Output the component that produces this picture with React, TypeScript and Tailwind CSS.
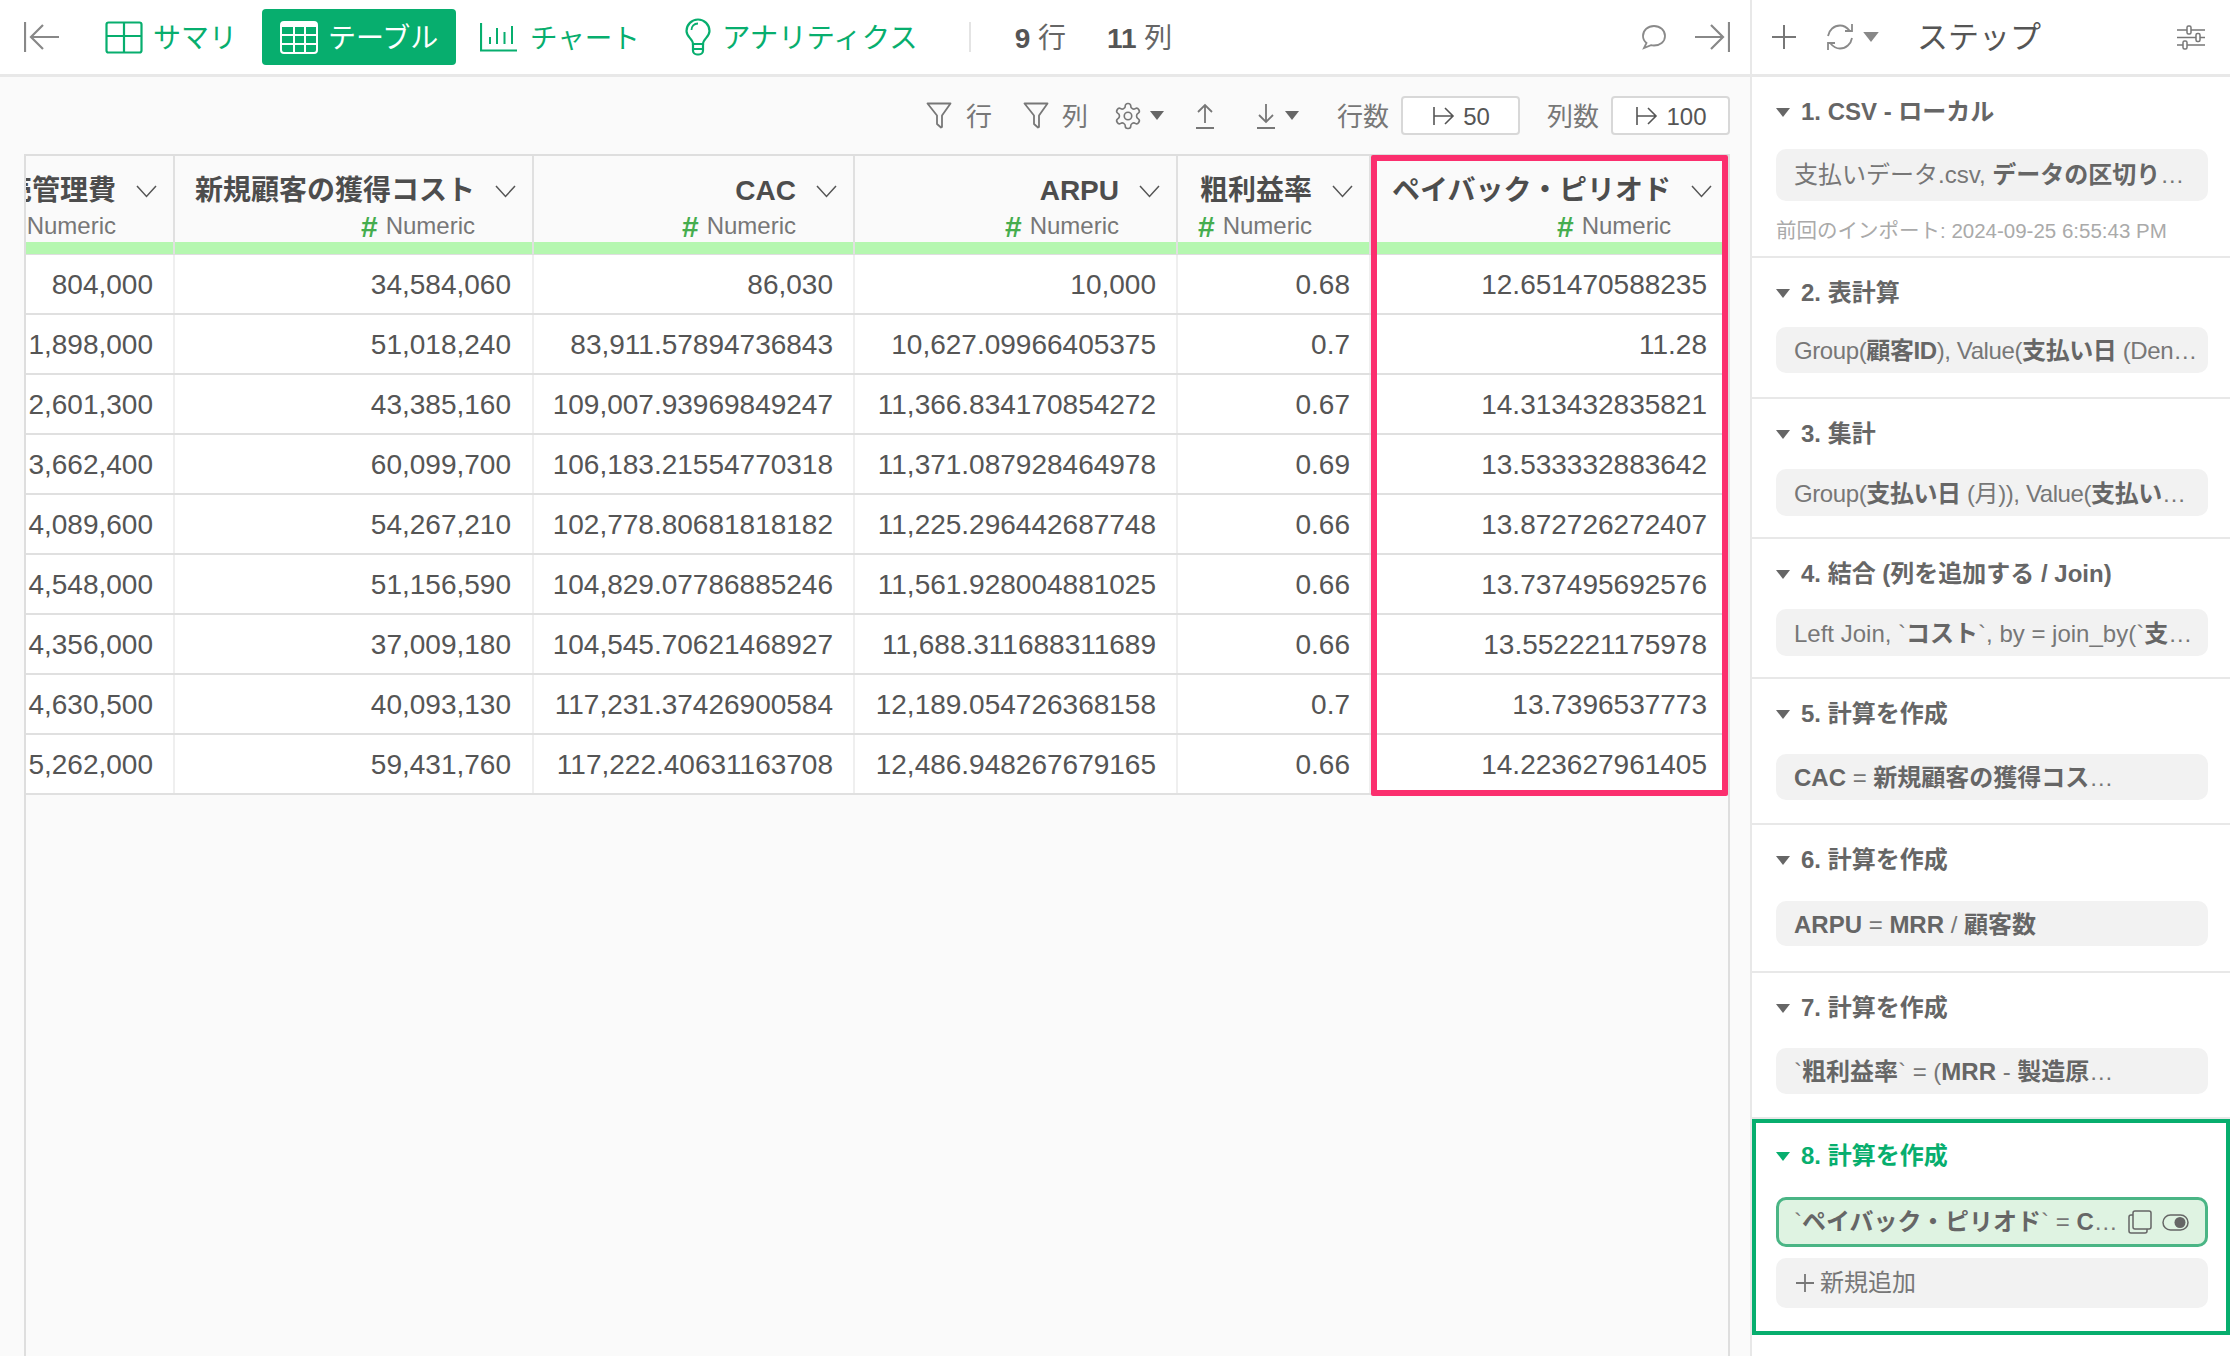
import type { ReactNode } from "react"

const GREEN = "#07ae6e"

function BackArrow() {
  return (
    <svg width="36" height="32" viewBox="0 0 36 32" fill="none" stroke="#888" strokeWidth="2.2">
      <path d="M1 1v30" />
      <path d="M35 16H8M19 4L7 16l12 12" />
    </svg>
  )
}

function ForwardArrow() {
  return (
    <svg width="36" height="32" viewBox="0 0 36 32" fill="none" stroke="#888" strokeWidth="2.2">
      <path d="M35 1v30" />
      <path d="M1 16h27M17 4l12 12-12 12" />
    </svg>
  )
}

function SummaryIcon() {
  return (
    <svg width="38" height="33" viewBox="0 0 38 33" fill="none" stroke={GREEN} strokeWidth="2.2">
      <rect x="1.500" y="1.500" width="35" height="30" rx="2" />
      <path d="M19 1.500v30M1.500 15h35" />
    </svg>
  )
}

function TableIcon() {
  return (
    <svg width="38" height="33" viewBox="0 0 38 33" fill="none" stroke="#fff" strokeWidth="2">
      <rect x="1" y="1" width="36" height="31" rx="3" />
      <path d="M1 3.500h36" strokeWidth="5" />
      <path d="M14 1v31M25 1v31M1 14h36M1 23h36" />
    </svg>
  )
}

function ChartIcon() {
  return (
    <svg width="37" height="29" viewBox="0 0 37 29" fill="none" stroke={GREEN} strokeWidth="2">
      <path d="M1 0v27.500h36" strokeWidth="2.200" />
      <path d="M10 21v-7M17 21V5M24.500 21V9M32 21V3" />
    </svg>
  )
}

function BulbIcon() {
  return (
    <svg width="26" height="38" viewBox="0 0 26 38" fill="none" stroke={GREEN} strokeWidth="2.200">
      <path d="M8 26c0-5-6.500-7-6.500-13a11.500 11.500 0 0 1 23 0c0 6-6.500 8-6.500 13z" />
      <path d="M13 5.500c-4 0-6.500 3-6.500 6.500" strokeWidth="1.800" />
      <path d="M8 26v6.500a4 4 0 0 0 4 4h2a4 4 0 0 0 4-4V26M8 31h10" />
    </svg>
  )
}

function CommentIcon() {
  return (
    <svg width="26" height="26" viewBox="0 0 26 26" fill="none" stroke="#8a8a8a" strokeWidth="1.800">
      <path d="M13 2c6 0 11 4 11 10s-5 9.500-11 9.500c-1 0-2 0-3-.3L3 24l2.500-5C3 17 2 15 2 12 2 6 7 2 13 2z" />
    </svg>
  )
}

function FilterIcon() {
  return (
    <svg width="26" height="27" viewBox="0 0 26 27" fill="none" stroke="#777" strokeWidth="1.800">
      <path d="M1.500 1.500h23L16 13.500V25l-1 .5-4-3.500v-8.500z" strokeLinejoin="round" />
    </svg>
  )
}

function GearIcon() {
  return (
    <svg width="30" height="30" viewBox="0 0 24 24" fill="none" stroke="#777" strokeWidth="1.300">
      <path d="M12.220 2h-.44a2 2 0 0 0-2 2v.18a2 2 0 0 1-1 1.730l-.43.250a2 2 0 0 1-2 0l-.15-.080a2 2 0 0 0-2.730.730l-.22.380a2 2 0 0 0 .730 2.730l.15.100a2 2 0 0 1 1 1.720v.510a2 2 0 0 1-1 1.740l-.15.090a2 2 0 0 0-.730 2.730l.22.380a2 2 0 0 0 2.730.730l.15-.080a2 2 0 0 1 2 0l.43.250a2 2 0 0 1 1 1.730V20a2 2 0 0 0 2 2h.44a2 2 0 0 0 2-2v-.18a2 2 0 0 1 1-1.730l.43-.250a2 2 0 0 1 2 0l.15.080a2 2 0 0 0 2.730-.730l.22-.390a2 2 0 0 0-.730-2.730l-.15-.080a2 2 0 0 1-1-1.740v-.500a2 2 0 0 1 1-1.740l.15-.090a2 2 0 0 0 .730-2.730l-.22-.380a2 2 0 0 0-2.730-.730l-.15.080a2 2 0 0 1-2 0l-.43-.250a2 2 0 0 1-1-1.730V4a2 2 0 0 0-2-2z" />
      <circle cx="12" cy="12" r="3" />
    </svg>
  )
}

function UploadIcon() {
  return (
    <svg width="20" height="26" viewBox="0 0 20 26" fill="none" stroke="#777" strokeWidth="1.800">
      <path d="M10 20V2M3 9l7-7 7 7M1 25h18" />
    </svg>
  )
}

function DownloadIcon() {
  return (
    <svg width="20" height="26" viewBox="0 0 20 26" fill="none" stroke="#777" strokeWidth="1.800">
      <path d="M10 1v18M3 12l7 7 7-7M1 25h18" />
    </svg>
  )
}

function Caret({ color = "#666", w = 14, h = 9 }: { color?: string; w?: number; h?: number }) {
  return (
    <svg width={w} height={h} viewBox="0 0 14 9" fill={color}>
      <path d="M0 0h14L7 9z" />
    </svg>
  )
}

function Chevron() {
  return (
    <svg width="21" height="13" viewBox="0 0 21 13" fill="none" stroke="#555" strokeWidth="1.500">
      <path d="M1 1l9.500 10.500L20 1" />
    </svg>
  )
}

function LimitIcon() {
  return (
    <svg width="22" height="22" viewBox="0 0 22 22" fill="none" stroke="#555" strokeWidth="1.600">
      <path d="M1 2v18M1 11h19M12 3l8 8-8 8" />
    </svg>
  )
}

function RefreshIcon() {
  return (
    <svg width="28" height="28" viewBox="0 0 28 28" fill="none" stroke="#8a8a8a" strokeWidth="1.800">
      <path d="M2 13C3 7 8 2.500 14 2.500c4 0 7 2 9.500 5M26 15c-1 6-6 10.500-12 10.500-4 0-7-2-9.500-5" />
      <path d="M26 1v7h-7M2 27v-7h7" />
    </svg>
  )
}

function SlidersIcon() {
  return (
    <svg width="28" height="25" viewBox="0 0 28 25" fill="#fff" stroke="#777" strokeWidth="1.500">
      <path d="M0 5h28M0 12.500h28M0 20h28" />
      <rect x="10" y="1" width="4" height="8" rx="1.500" />
      <rect x="19" y="8.500" width="4" height="8" rx="1.500" />
      <rect x="6" y="16" width="4" height="8" rx="1.500" />
    </svg>
  )
}

function CopyIcon() {
  return (
    <svg width="24" height="24" viewBox="0 0 24 24" fill="none" stroke="#666" strokeWidth="1.500">
      <path d="M5 5H3a2 2 0 0 0-2 2v14a2 2 0 0 0 2 2h14a2 2 0 0 0 2-2v-2" />
      <rect x="5" y="1" width="18" height="18" rx="2" />
    </svg>
  )
}

function ToggleIcon() {
  return (
    <svg width="27" height="17" viewBox="0 0 27 17" fill="none" stroke="#666" strokeWidth="1.500">
      <rect x="1" y="1" width="25" height="15" rx="7.500" />
      <circle cx="18" cy="8.500" r="5.500" fill="#666" stroke="none" />
    </svg>
  )
}

const columns = [
  { title: "販売管理費", width: "w-[149px]", pad: "pr-[20px]" },
  { title: "新規顧客の獲得コスト", width: "w-[359px]", pad: "pr-[21px]" },
  { title: "CAC", width: "w-[321px]", pad: "pr-[20px]" },
  { title: "ARPU", width: "w-[323px]", pad: "pr-[20px]" },
  { title: "粗利益率", width: "w-[193px]", pad: "pr-[19px]" },
  { title: "ペイバック・ピリオド", width: "w-[357px]", pad: "pr-[21px]" },
]

const rows = [
  ["804,000", "34,584,060", "86,030", "10,000", "0.68", "12.651470588235"],
  ["1,898,000", "51,018,240", "83,911.57894736843", "10,627.09966405375", "0.7", "11.28"],
  ["2,601,300", "43,385,160", "109,007.93969849247", "11,366.834170854272", "0.67", "14.313432835821"],
  ["3,662,400", "60,099,700", "106,183.21554770318", "11,371.087928464978", "0.69", "13.533332883642"],
  ["4,089,600", "54,267,210", "102,778.80681818182", "11,225.296442687748", "0.66", "13.872726272407"],
  ["4,548,000", "51,156,590", "104,829.07786885246", "11,561.928004881025", "0.66", "13.737495692576"],
  ["4,356,000", "37,009,180", "104,545.70621468927", "11,688.311688311689", "0.66", "13.552221175978"],
  ["4,630,500", "40,093,130", "117,231.37426900584", "12,189.054726368158", "0.7", "13.7396537773"],
  ["5,262,000", "59,431,760", "117,222.40631163708", "12,486.948267679165", "0.66", "14.223627961405"],
]

function HeaderCell({ title, width, last }: { title: string; width: string; last: boolean }) {
  return (
    <div className={`${width} shrink-0 flex flex-col overflow-hidden ${last ? "" : "border-r-2 border-[#e0e0e0]"}`}>
      <div className="h-[86px] pt-[17px] flex flex-col items-end">
        <div className="h-[36px] flex items-center justify-end pr-[16px] whitespace-nowrap">
          <span className="text-[28px] font-bold text-[#4d4d4d]">{title}</span>
          <span className="ml-[20px] flex items-center">
            <Chevron />
          </span>
        </div>
        <div className="h-[34px] flex items-center justify-end pr-[57px] whitespace-nowrap">
          <span className="text-[30px] font-bold text-[#45ad4e] mr-[8px]">#</span>
          <span className="text-[24px] text-[#777]">Numeric</span>
        </div>
      </div>
      <div className="h-[12px] bg-[#b5f7b0]" />
    </div>
  )
}

function DataTable() {
  return (
    <div className="relative border-t-2 border-[#dedede]">
      <div className="flex border-b border-[#dedede]">
        {columns.map((c, i) => (
          <HeaderCell key={c.title} title={c.title} width={c.width} last={i === columns.length - 1} />
        ))}
      </div>
      {rows.map((row) => (
        <div key={row[0]} className="flex h-[60px] bg-white border-b-2 border-[#e0e0e0]">
          {row.map((value, i) => (
            <div
              key={i}
              className={`${columns[i].width} ${columns[i].pad} shrink-0 flex items-center justify-end pt-[2px] text-[28px] text-[#555] ${
                i === row.length - 1 ? "" : "border-r-2 border-[#efefef]"
              }`}
            >
              {value}
            </div>
          ))}
        </div>
      ))}
      <div className="absolute left-[1345px] top-[-1px] w-[357px] h-[641px] border-[6px] border-[#fb2f6e] rounded-[2px]" />
    </div>
  )
}

function TopBar() {
  return (
    <div className="h-[77px] shrink-0 flex items-center border-b-[3px] border-[#e8e8e8] bg-white pl-[24px] pr-[20px]">
      <BackArrow />
      <div className="ml-[45px] flex items-center gap-[10px] text-[28px] text-[#07ae6e] w-[136px]">
        <SummaryIcon />
        <span className="whitespace-nowrap pt-[3px]">サマリ</span>
      </div>
      <div className="ml-[21px] w-[194px] h-[56px] rounded-[4px] bg-[#07ae6e] flex items-center pl-[18px] gap-[10px] text-[28px] text-white">
        <TableIcon />
        <span className="whitespace-nowrap pt-[3px]">テーブル</span>
      </div>
      <div className="ml-[24px] flex items-center gap-[13px] text-[27.5px] text-[#07ae6e] w-[179px]">
        <ChartIcon />
        <span className="whitespace-nowrap pt-[3px]">チャート</span>
      </div>
      <div className="ml-[26px] flex items-center gap-[11px] text-[28.4px] text-[#07ae6e]">
        <BulbIcon />
        <span className="whitespace-nowrap pt-[3px]">アナリティクス</span>
      </div>
      <div className="ml-[51px] h-[30px] w-[2px] bg-[#e4e4e4]" />
      <div className="ml-[44px] pt-[3px] text-[28px] text-[#666] whitespace-nowrap">
        <b className="text-[#555]">9</b> 行
      </div>
      <div className="ml-[41px] pt-[3px] text-[28px] text-[#666] whitespace-nowrap">
        <b className="text-[#555]">11</b> 列
      </div>
      <div className="ml-auto flex items-center gap-[27px]">
        <CommentIcon />
        <ForwardArrow />
      </div>
    </div>
  )
}

function LimitBox({ value }: { value: string }) {
  return (
    <div className="w-[119px] h-[39px] ml-[12px] pl-[2px] flex items-center justify-center gap-[8px] rounded-[4px] border-2 border-[#d8d8d8] bg-white text-[24px] text-[#555]">
      <LimitIcon />
      <span className="pt-[2px]">{value}</span>
    </div>
  )
}

function TableTools() {
  return (
    <div className="h-[77px] shrink-0 flex items-center justify-end pr-[20px] text-[26px] text-[#777]">
      <FilterIcon />
      <span className="ml-[14px] pt-[3px]">行</span>
      <span className="ml-[31px] flex">
        <FilterIcon />
      </span>
      <span className="ml-[13px] pt-[3px]">列</span>
      <span className="ml-[25px] flex">
        <GearIcon />
      </span>
      <span className="ml-[7px] flex">
        <Caret />
      </span>
      <span className="ml-[31px] flex">
        <UploadIcon />
      </span>
      <span className="ml-[41px] flex">
        <DownloadIcon />
      </span>
      <span className="ml-[9px] flex">
        <Caret />
      </span>
      <span className="ml-[38px] pt-[3px]">行数</span>
      <LimitBox value="50" />
      <span className="ml-[27px] pt-[3px]">列数</span>
      <LimitBox value="100" />
    </div>
  )
}

type Step = { title: string; top: string; height: string; body: ReactNode; sectionHeight: string; tight?: boolean }

const steps: Step[] = [
  {
    title: "2. 表計算",
    top: "mt-[19px]",
    height: "h-[46px]",
    sectionHeight: "h-[141px]",
    tight: true,
    body: (
      <>
        Group(<b>顧客ID</b>), Value(<b>支払い日</b> (Den…
      </>
    ),
  },
  {
    title: "3. 集計",
    top: "mt-[20px]",
    height: "h-[47px]",
    sectionHeight: "h-[140px]",
    tight: true,
    body: (
      <>
        Group(<b>支払い日</b> (月)), Value(<b>支払い</b>…
      </>
    ),
  },
  {
    title: "4. 結合 (列を追加する / Join)",
    top: "mt-[20px]",
    height: "h-[47px]",
    sectionHeight: "h-[140px]",
    body: (
      <>
        Left Join, `<b>コスト</b>`, by = join_by(`<b>支</b>…
      </>
    ),
  },
  {
    title: "5. 計算を作成",
    top: "mt-[25px]",
    height: "h-[46px]",
    sectionHeight: "h-[146px]",
    body: (
      <>
        <b>CAC</b> = <b>新規顧客の獲得コス</b>…
      </>
    ),
  },
  {
    title: "6. 計算を作成",
    top: "mt-[26px]",
    height: "h-[45px]",
    sectionHeight: "h-[148px]",
    body: (
      <>
        <b>ARPU</b> = <b>MRR</b> / <b>顧客数</b>
      </>
    ),
  },
  {
    title: "7. 計算を作成",
    top: "mt-[25px]",
    height: "h-[46px]",
    sectionHeight: "h-[146px]",
    body: (
      <>
        `<b>粗利益率</b>` = (<b>MRR</b> - <b>製造原</b>…
      </>
    ),
  },
]

function StepTitle({ title, color = "#666" }: { title: string; color?: string }) {
  return (
    <div className="h-[30px] flex items-center ml-[24px] whitespace-nowrap">
      <Caret color={color} />
      <span className="ml-[11px] text-[24px] font-bold" style={{ color }}>
        {title}
      </span>
    </div>
  )
}

function StepsPanel() {
  return (
    <div className="w-[480px] shrink-0 border-l-2 border-[#e8e8e8] bg-white flex flex-col">
      <div className="h-[77px] shrink-0 flex items-center border-b-[3px] border-[#e8e8e8] pl-[19px] pr-[25px]">
        <svg width="26" height="26" viewBox="0 0 26 26" fill="none" stroke="#777" strokeWidth="2">
          <path d="M13 1v24M1 13h24" />
        </svg>
        <span className="ml-[29px] flex">
          <RefreshIcon />
        </span>
        <span className="ml-[9px] flex">
          <Caret color="#888" w={16} h={10} />
        </span>
        <span className="ml-[38px] pt-[2px] text-[31px] text-[#555]">ステップ</span>
        <span className="ml-auto flex">
          <SlidersIcon />
        </span>
      </div>

      <div className="h-[181px] pt-[20px] border-b-2 border-[#e8e8e8] shrink-0">
        <StepTitle title="1. CSV - ローカル" />
        <div className="mt-[22px] ml-[24px] w-[432px] h-[52px] rounded-[10px] bg-[#f2f2f2] flex items-center pl-[18px] text-[24px] text-[#777] whitespace-nowrap [&_b]:text-[#666]">
          支払いデータ.csv,&nbsp;<b>データの区切り</b>…
        </div>
        <div className="mt-[15px] ml-[24px] text-[20.5px] text-[#aaa] whitespace-nowrap">前回のインポート: 2024-09-25 6:55:43 PM</div>
      </div>

      {steps.map((s) => (
        <div key={s.title} className={`${s.sectionHeight} pt-[20px] border-b-2 border-[#e8e8e8] shrink-0`}>
          <StepTitle title={s.title} />
          <div
            className={`${s.top} ${s.height} ${
              s.tight ? "tracking-[-0.4px]" : ""
            } ml-[24px] w-[432px] rounded-[10px] bg-[#f2f2f2] flex items-center pl-[18px] pt-[2px] text-[24px] text-[#777] whitespace-nowrap [&_b]:text-[#666]`}
          >
            <span>{s.body}</span>
          </div>
        </div>
      ))}

      <div className="h-[216px] shrink-0 border-4 border-[#07ae6e] pt-[18px]">
        <div className="-ml-[4px]">
          <StepTitle title="8. 計算を作成" color="#07ae6e" />
        </div>
        <div className="mt-[26px] ml-[20px] w-[432px] h-[50px] rounded-[10px] border-[3px] border-[#4ab585] bg-[#dff3e2] flex items-center pl-[15px] text-[24px] text-[#777] whitespace-nowrap [&_b]:text-[#666]">
          <span>
            `<b>ペイバック・ピリオド</b>` = <b>C</b>…
          </span>
          <span className="ml-[10px] flex">
            <CopyIcon />
          </span>
          <span className="ml-[10px] flex">
            <ToggleIcon />
          </span>
        </div>
        <div className="mt-[11px] ml-[20px] w-[432px] h-[50px] rounded-[10px] bg-[#f2f2f2] flex items-center pl-[20px] text-[24px] text-[#777]">
          <svg width="18" height="18" viewBox="0 0 18 18" fill="none" stroke="#777" strokeWidth="1.800">
            <path d="M9 0v18M0 9h18" />
          </svg>
          <span className="ml-[6px]">新規追加</span>
        </div>
      </div>
    </div>
  )
}

export default function App() {
  return (
    <div className="w-[2230px] h-[1356px] flex overflow-hidden bg-white font-['Liberation_Sans','Noto_Sans_CJK_JP',sans-serif]">
      <div className="w-[1750px] shrink-0 flex flex-col bg-[#fafafa]">
        <TopBar />
        <TableTools />
        <div className="ml-[24px] w-[1706px] flex-1 border-x-2 border-[#dedede]">
          <DataTable />
        </div>
      </div>
      <StepsPanel />
    </div>
  )
}
